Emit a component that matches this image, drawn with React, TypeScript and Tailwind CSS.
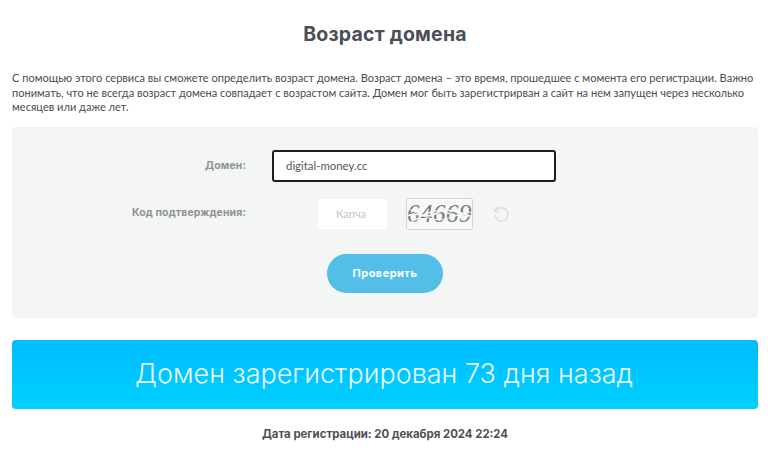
import React from "react";

const App = () => {
  return (
    <div className="w-[768px] h-[452px] overflow-hidden bg-white pl-3 pr-[10px] font-['Open_Sans',sans-serif]">
      <h1 className="pt-[22px] h-[65px] text-center text-[19.5px] leading-[24px] font-bold tracking-[0.2px] text-[#4a4f57] font-['Inter',sans-serif]">
        Возраст домена
      </h1>
      <p className="mt-[5px] h-[41px] pt-px text-[11.05px] leading-[14.5px] text-[#4c4c4c] font-['Lato',sans-serif]">
        С помощью этого сервиса вы сможете определить возраст домена. Возраст домена – это время, прошедшее с момента его регистрации. Важно понимать, что не всегда возраст домена совпадает с возрастом сайта. Домен мог быть зарегистрирван а сайт на нем запущен через несколько месяцев или даже лет.
      </p>
      <div className="mt-[16px] h-[191px] rounded-[4px] bg-[#f4f6f6] pt-[23px]">
        <div className="flex h-[32px] items-center">
          <label className="w-[234px] text-right text-[10.5px] font-bold tracking-[0.1px] text-[#8f9294] font-['Inter',sans-serif]">Домен:</label>
          <div className="ml-[26px] flex h-[32px] w-[284px] items-center rounded-[3px] border-2 border-[#1c1e20] bg-white pl-[12px] text-[11.4px] text-[#555555] font-['Lato',sans-serif]">
            digital-money.cc
          </div>
        </div>
        <div className="mt-[16px] flex h-[32px] items-center">
          <label className="-mt-[3px] w-[234px] text-right text-[10.5px] font-bold tracking-[0.1px] text-[#8f9294] font-['Inter',sans-serif]">Код подтверждения:</label>
          <div className="ml-[72px] flex h-[30px] w-[69px] items-center justify-center bg-white pr-[3px] text-[11px] text-[#c2c4c5] font-['Lato',sans-serif]">
            Капча
          </div>
          <div className="relative ml-[19px] flex h-[32px] w-[67px] items-center justify-center overflow-hidden rounded-[2px] border border-[#d5d7d7] bg-[#f7f8f8] text-[25px] italic tracking-[0.5px] text-[#77797b] font-['Liberation_Serif',serif]">
            64669
            <svg className="absolute inset-0 h-full w-full" viewBox="0 0 65 30" fill="none" stroke="#f7f8f8">
              <path d="M0 17 C10 11 18 21 28 15 S48 11 65 18" strokeWidth="1.6" />
              <path d="M4 23 C14 18 24 10 34 12 S52 22 62 9" strokeWidth="1.2" />
              <path d="M2 10 C14 16 26 23 38 20 S56 14 65 13" strokeWidth="1" />
            </svg>
          </div>
          <svg className="ml-[19px] h-[18px] w-[18px]" viewBox="0 0 18 18" fill="none" stroke="#dcdede" strokeWidth="1.6">
            <path d="M5.2 4.4 A6.6 6.6 0 1 1 3 10" />
            <path d="M6.4 1.6 L2.4 5.6 L6.8 7.6" fill="none" />
          </svg>
        </div>
        <div className="mt-[24px] flex justify-center">
          <button className="h-[39px] w-[116px] rounded-full bg-[#53bfe9] text-[11px] font-bold tracking-[0.45px] text-white font-['Inter',sans-serif]">
            Проверить
          </button>
        </div>
      </div>
      <div className="mt-[22px] flex h-[69px] items-center justify-center rounded-[4px] bg-gradient-to-b from-[#00bbff] to-[#00d0ff] pb-px pr-[2px] text-[27px] text-[#e6f9ff] font-['Inter',sans-serif] font-light">
        Домен зарегистрирован 73 дня назад
      </div>
      <p className="mt-[17px] pt-px text-center text-[11.4px] leading-[14px] font-bold text-[#4e5154] font-['Inter',sans-serif]">
        Дата регистрации: 20 декабря 2024 22:24
      </p>
    </div>
  );
};

export default App;
